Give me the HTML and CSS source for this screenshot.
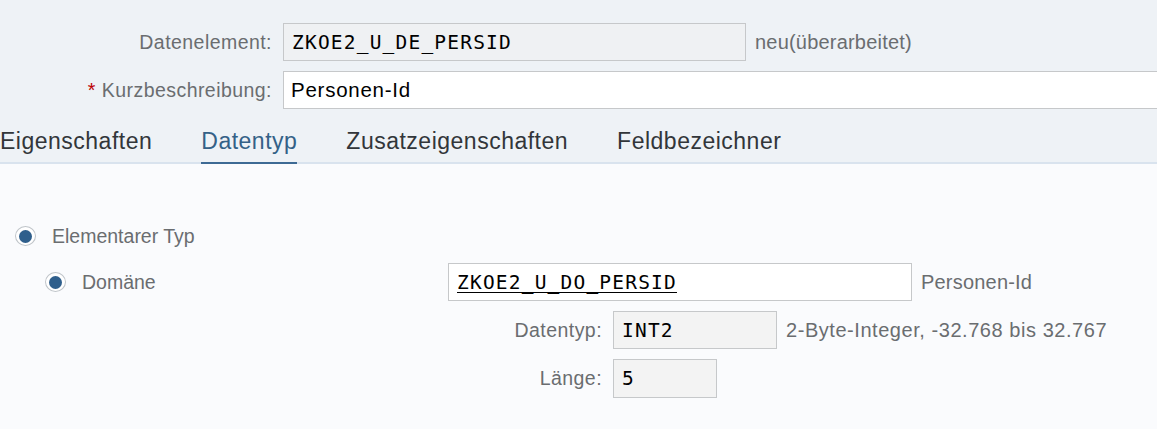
FILE: index.html
```html
<!DOCTYPE html>
<html lang="de">
<head>
<meta charset="utf-8">
<title>Datenelement</title>
<link rel="stylesheet" href="styles.css">
</head>
<body>
<div class="page">
  <div class="header">
    <div class="field-row">
      <label class="label">Datenelement:</label>
      <div class="input input-ro input-name">ZKOE2_U_DE_PERSID</div>
      <span class="note">neu(überarbeitet)</span>
    </div>
    <div class="field-row">
      <label class="label"><span class="req">*</span> Kurzbeschreibung:</label>
      <div class="input input-edit input-wide">Personen-Id</div>
    </div>
    <div class="tabs">
      <div class="tab">Eigenschaften</div>
      <div class="tab active">Datentyp</div>
      <div class="tab">Zusatzeigenschaften</div>
      <div class="tab">Feldbezeichner</div>
    </div>
  </div>
  <div class="content">
    <div class="radio-row level1">
      <span class="radio"><span class="dot"></span></span>
      <span class="radio-label">Elementarer Typ</span>
    </div>
    <div class="radio-row level2">
      <div class="radio-area">
        <span class="radio"><span class="dot"></span></span>
        <span class="radio-label">Domäne</span>
      </div>
      <div class="input input-edit input-domain"><span class="link">ZKOE2_U_DO_PERSID</span></div>
      <span class="note">Personen-Id</span>
    </div>
    <div class="field-row sub">
      <label class="label label-sub">Datentyp:</label>
      <div class="input input-ro2 input-type">INT2</div>
      <span class="note note-wide">2-Byte-Integer, -32.768 bis 32.767</span>
    </div>
    <div class="field-row sub">
      <label class="label label-sub">Länge:</label>
      <div class="input input-ro2 input-len">5</div>
    </div>
  </div>
</div>
</body>
</html>
```
FILE: styles.css
```css
html, body {
  margin: 0;
  padding: 0;
  background: #fafbfd;
  overflow: hidden;
}
.page {
  width: 1157px;
  height: 429px;
  overflow: hidden;
  font-family: "Liberation Sans", Arial, sans-serif;
  color: #32363a;
}
.header {
  background: #eef2f6;
  padding-top: 23px;
}
.field-row {
  display: flex;
  align-items: center;
  height: 38px;
  margin-bottom: 10px;
}
.label {
  box-sizing: border-box;
  width: 283px;
  padding-right: 11px;
  text-align: right;
  font-size: 19.5px;
  letter-spacing: 0.45px;
  color: #6a6d70;
  white-space: nowrap;
  flex: none;
}
.req {
  color: #bb0000;
}
.input {
  box-sizing: border-box;
  height: 38px;
  border: 1px solid #c6c8ca;
  display: flex;
  align-items: center;
  padding-left: 8px;
  flex: none;
  white-space: nowrap;
  color: #000;
}
.input-ro,
.input-ro2,
.input-domain {
  font-family: "DejaVu Sans Mono", "Liberation Mono", monospace;
  font-size: 19.5px;
  letter-spacing: 1.2px;
}
.input-ro {
  background: #eff1f3;
}
.input-name {
  width: 463px;
}
.input-edit {
  background: #ffffff;
}
.input-wide {
  width: 900px;
  font-size: 20.5px;
  letter-spacing: 0.75px;
  padding-left: 7px;
}
.note {
  margin-left: 9px;
  font-size: 20px;
  letter-spacing: 0.2px;
  color: #6a6d70;
  white-space: nowrap;
}
.note-wide {
  letter-spacing: 0.55px;
}
.tabs {
  display: flex;
  gap: 49px;
  border-bottom: 2px solid #d9e3ee;
  height: 43px;
}
.tab {
  font-size: 23px;
  color: #32363a;
  display: flex;
  align-items: center;
  padding-top: 2px;
  margin-bottom: -2px;
  border-bottom: 2px solid transparent;
  letter-spacing: 0.5px;
  white-space: nowrap;
}
.tab.active {
  color: #346187;
  border-bottom-color: #3d6a94;
}
.content {
  padding-top: 53px;
}
.radio-row {
  display: flex;
  align-items: center;
  height: 38px;
  margin-bottom: 8px;
}
.radio-row.level1 {
  padding-left: 15px;
}
.radio-row.level2 {
  margin-bottom: 10px;
}
.radio-area {
  box-sizing: border-box;
  width: 448px;
  padding-left: 45px;
  display: flex;
  align-items: center;
  flex: none;
}
.radio {
  box-sizing: border-box;
  width: 21px;
  height: 20px;
  border-radius: 50%;
  border: 1px solid #bfc4c9;
  background: #ffffff;
  display: flex;
  align-items: center;
  justify-content: center;
  flex: none;
}
.dot {
  width: 13px;
  height: 13px;
  border-radius: 50%;
  background: #2f5f8c;
}
.radio-label {
  margin-left: 16px;
  font-size: 19.5px;
  color: #6a6d70;
}
.input-domain {
  width: 464px;
}
.link {
  text-decoration: underline;
  text-underline-offset: 3px;
}
.label-sub {
  width: 613px;
}
.input-ro2 {
  background: #f3f3f3;
}
.input-type {
  width: 164px;
}
.input-len {
  width: 104px;
  height: 39px;
}
```
